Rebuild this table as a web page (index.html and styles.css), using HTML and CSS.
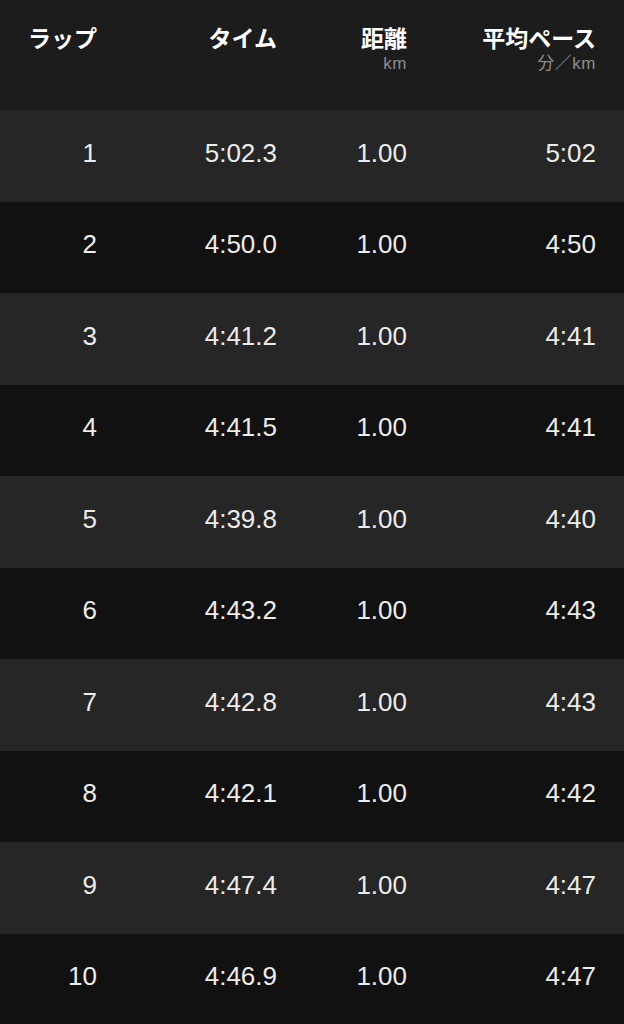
FILE: index.html
```html
<!DOCTYPE html>
<html lang="ja">
<head>
<meta charset="utf-8">
<title>ラップ</title>
<link rel="stylesheet" href="styles.css">
</head>
<body>
<div class="table">
  <div class="head">
    <div class="hcell"><div class="title">ラップ</div></div>
    <div class="hcell"><div class="title">タイム</div></div>
    <div class="hcell"><div class="title">距離</div><div class="sub">km</div></div>
    <div class="hcell"><div class="title">平均ペース</div><div class="sub">分／km</div></div>
  </div>
  <div class="row light"><span>1</span><span>5:02.3</span><span>1.00</span><span>5:02</span></div>
  <div class="row dark"><span>2</span><span>4:50.0</span><span>1.00</span><span>4:50</span></div>
  <div class="row light"><span>3</span><span>4:41.2</span><span>1.00</span><span>4:41</span></div>
  <div class="row dark"><span>4</span><span>4:41.5</span><span>1.00</span><span>4:41</span></div>
  <div class="row light"><span>5</span><span>4:39.8</span><span>1.00</span><span>4:40</span></div>
  <div class="row dark"><span>6</span><span>4:43.2</span><span>1.00</span><span>4:43</span></div>
  <div class="row light"><span>7</span><span>4:42.8</span><span>1.00</span><span>4:43</span></div>
  <div class="row dark"><span>8</span><span>4:42.1</span><span>1.00</span><span>4:42</span></div>
  <div class="row light"><span>9</span><span>4:47.4</span><span>1.00</span><span>4:47</span></div>
  <div class="row dark"><span>10</span><span>4:46.9</span><span>1.00</span><span>4:47</span></div>
</div>
</body>
</html>
```
FILE: styles.css
```css
html, body {
  margin: 0;
  padding: 0;
  background: #111111;
}
body {
  font-family: "Liberation Sans", "Noto Sans CJK JP", sans-serif;
  color: #ececec;
}
.table {
  width: 624px;
}
.head,
.row {
  display: grid;
  grid-template-columns: 97px 180px 130px 189px 28px;
}
.head {
  height: 110px;
  background: #1c1c1c;
  box-sizing: border-box;
  padding-top: 22px;
}
.hcell {
  text-align: right;
}
.title {
  font-family: "Noto Sans CJK JP", sans-serif;
  font-weight: 700;
  font-size: 23px;
  line-height: 30px;
  color: #ffffff;
}
.sub {
  font-family: "Liberation Sans", "Noto Sans CJK JP", sans-serif;
  font-size: 17px;
  line-height: 20px;
  margin-top: 2px;
  letter-spacing: 0.5px;
  color: #8c8c8c;
}
.row {
  height: 91.5px;
  align-items: center;
  box-sizing: border-box;
  padding-bottom: 6px;
  font-size: 26px;
  line-height: 30px;
}
.row span {
  text-align: right;
}
.light {
  background: #262626;
}
.dark {
  background: #111111;
}
```
